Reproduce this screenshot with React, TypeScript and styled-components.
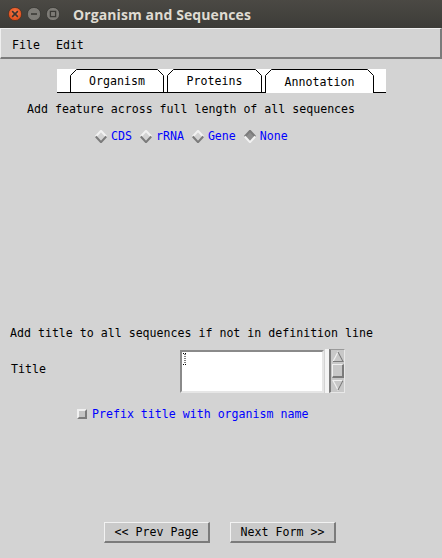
import React from "react";
import styled, { createGlobalStyle } from "styled-components";

const Global = createGlobalStyle`
  html, body { margin: 0; padding: 0; background: #d3d3d3; }
  * { box-sizing: border-box; }
`;

const MONO = `"DejaVu Sans Mono", "Liberation Mono", monospace`;

const Window = styled.div`
  width: 442px;
  height: 558px;
  background: #d3d3d3;
  display: flex;
  flex-direction: column;
  font-family: ${MONO};
  font-size: 11.6px;
  color: #000;
  overflow: hidden;
`;

const TitleBar = styled.div`
  height: 28px;
  flex: none;
  display: flex;
  align-items: center;
  background: linear-gradient(to bottom, #4b4944, #3d3c38);
  padding-left: 8px;
`;

const WinButtons = styled.div`
  display: flex;
  gap: 5px;
  align-items: center;
`;

const Title = styled.div`
  margin-left: 13px;
  font-family: "Open Sans", "DejaVu Sans", sans-serif;
  font-weight: 700;
  font-size: 14px;
  color: #dfdbd2;
  letter-spacing: 0.1px;
`;

const MenuBar = styled.div`
  height: 31px;
  flex: none;
  display: flex;
  align-items: center;
  gap: 16px;
  padding: 3px 0 0 11px;
  border-top: 1px solid #efefef;
  border-left: 1px solid #efefef;
  border-bottom: 2px solid #7b7b7b;
  border-right: 2px solid #7b7b7b;
`;

const MenuItem = styled.span`
  line-height: 14px;
`;

const Content = styled.div`
  flex: 1;
  display: flex;
  flex-direction: column;
`;

const TabStrip = styled.div`
  margin: 10px 0 0 57px;
  width: 329px;
  height: 24px;
  background: #fff;
  border-bottom: 1px solid #000;
  display: flex;
  padding-left: 13px;
  gap: 3px;
`;

const Tab = styled.div<{ $w: number; $active?: boolean }>`
  position: relative;
  width: ${(p) => p.$w}px;
  height: ${(p) => (p.$active ? 24 : 23)}px;
  background: #fff;
  display: flex;
  align-items: center;
  justify-content: center;
  padding-top: 1px;
  line-height: 14px;
  z-index: ${(p) => (p.$active ? 1 : 0)};
`;

const TabOutline = styled.svg`
  position: absolute;
  left: 0;
  top: 0;
  pointer-events: none;
`;

const TabLabel = styled.span`
  position: relative;
`;

const Line = styled.div<{ $top: number; $left: number }>`
  margin-top: ${(p) => p.$top}px;
  margin-left: ${(p) => p.$left}px;
  line-height: 14px;
  white-space: pre;
`;

const RadioRow = styled.div`
  margin: 13px 0 0 95px;
  display: flex;
  align-items: center;
  height: 14px;
  gap: 8px;
`;

const RadioItem = styled.div`
  display: flex;
  align-items: center;
  gap: 4px;
  color: #0000ff;
  line-height: 14px;
`;

const TitleRow = styled.div`
  margin: 9px 0 0 11px;
  display: flex;
  height: 44px;
`;

const FieldLabel = styled.div`
  width: 169px;
  padding-top: 13px;
  line-height: 14px;
`;

const TextBox = styled.div`
  margin-top: 1px;
  width: 144px;
  height: 43px;
  background: #fff;
  border-top: 2px solid #8a8a8a;
  border-left: 2px solid #8a8a8a;
  border-bottom: 2px solid #e6e6e6;
  border-right: 2px solid #e6e6e6;
  padding: 1px 0 0 1px;
`;

const Divider = styled.div`
  width: 4px;
  margin-left: 1px;
  background: #f4f4f4;
`;

const ScrollBar = styled.div`
  width: 16px;
  height: 44px;
  background: #c8c8c8;
  border-left: 2px solid #7b7b7b;
  border-top: 1px solid #9a9a9a;
  border-bottom: 1px solid #e8e8e8;
  border-right: 1px solid #e8e8e8;
  display: flex;
  flex-direction: column;
  align-items: center;
  justify-content: space-between;
  padding: 1px 0;
`;

const CheckRow = styled.div`
  margin: 14px 0 0 77px;
  display: flex;
  align-items: center;
  gap: 5px;
  color: #0000ff;
  line-height: 14px;
`;

const CheckBox = styled.div`
  width: 10px;
  height: 10px;
  background: #c4c4c4;
  border-top: 2px solid #f0f0f0;
  border-left: 2px solid #f0f0f0;
  border-bottom: 2px solid #7b7b7b;
  border-right: 2px solid #7b7b7b;
`;

const ButtonRow = styled.div`
  margin: 101px 0 0 104px;
  display: flex;
  gap: 20px;
`;

const Button = styled.div`
  width: 106px;
  height: 21px;
  background: #cacaca;
  border-top: 1px solid #f2f2f2;
  border-left: 1px solid #f2f2f2;
  border-bottom: 2px solid #7b7b7b;
  border-right: 2px solid #7b7b7b;
  display: flex;
  align-items: center;
  justify-content: center;
  line-height: 14px;
  white-space: pre;
`;

const CircleBtn = ({ kind }: { kind: "close" | "min" | "max" }) => (
  <svg width="14" height="14" viewBox="0 0 14 14">
    {kind === "close" ? (
      <>
        <defs>
          <radialGradient id="cg" cx="50%" cy="40%" r="60%">
            <stop offset="0" stopColor="#f77b4b" />
            <stop offset="1" stopColor="#dc4a17" />
          </radialGradient>
        </defs>
        <circle cx="7" cy="7" r="6.6" fill="url(#cg)" stroke="#3a2a22" strokeWidth="0.6" />
        <path d="M4.6 4.6 L9.4 9.4 M9.4 4.6 L4.6 9.4" stroke="#3b3430" strokeWidth="1.6" strokeLinecap="round" />
      </>
    ) : (
      <>
        <circle cx="7" cy="7" r="6.6" fill="#7e7c77" stroke="#2e2d2a" strokeWidth="0.6" />
        {kind === "min" ? (
          <path d="M4 7 H10" stroke="#3b3a36" strokeWidth="1.6" />
        ) : (
          <rect x="4.4" y="4.4" width="5.2" height="5.2" fill="none" stroke="#3b3a36" strokeWidth="1.3" />
        )}
      </>
    )}
  </svg>
);

const TabShape = ({ w, h }: { w: number; h: number }) => (
  <TabOutline width={w} height={h} viewBox={`0 0 ${w} ${h}`}>
    <path
      d={`M0.5 ${h} L0.5 6.5 L6.5 0.5 L${w - 6.5} 0.5 L${w - 0.5} 6.5 L${w - 0.5} ${h}`}
      fill="none"
      stroke="#000"
      strokeWidth="1"
    />
  </TabOutline>
);

const Diamond = ({ on }: { on?: boolean }) => (
  <svg width="12" height="13" viewBox="0 0 12 13">
    <polygon points="6,0.5 11.5,6.5 6,12.5 0.5,6.5" fill={on ? "#8e8e8e" : "#d3d3d3"} />
    <path d="M0.8 6.5 L6 0.8 L11.2 6.5" fill="none" stroke={on ? "#7b7b7b" : "#f2f2f2"} strokeWidth="2" />
    <path d="M0.8 6.5 L6 12.2 L11.2 6.5" fill="none" stroke={on ? "#f2f2f2" : "#7b7b7b"} strokeWidth="2" />
  </svg>
);

const Cursor = () => (
  <svg width="4" height="12" viewBox="0 0 4 12">
    <path d="M0 0.5 H4 M2 1 V11 M0 11.5 H4" stroke="#000" strokeWidth="1" strokeDasharray="1 1" />
  </svg>
);

const Arrow = ({ up }: { up?: boolean }) => (
  <svg width="12" height="11" viewBox="0 0 12 11">
    {up ? (
      <>
        <path d="M1 10.5 L6 1 L11 10.5" fill="none" stroke="#f0f0f0" strokeWidth="1.2" />
        <path d="M1 10.5 H11 L6 1" fill="none" stroke="#7b7b7b" strokeWidth="1.2" />
      </>
    ) : (
      <>
        <path d="M1 0.5 L6 10 L11 0.5 Z" fill="none" stroke="#f0f0f0" strokeWidth="1.2" />
        <path d="M6 10 L11 0.5" fill="none" stroke="#7b7b7b" strokeWidth="1.2" />
      </>
    )}
  </svg>
);

const MidBox = styled.div`
  width: 12px;
  height: 14px;
  border-top: 1px solid #f0f0f0;
  border-left: 1px solid #f0f0f0;
  border-bottom: 2px solid #7b7b7b;
  border-right: 2px solid #7b7b7b;
`;

const tabs = [
  { label: "Organism", w: 94 },
  { label: "Proteins", w: 95 },
  { label: "Annotation", w: 109, active: true },
];

const radios = [
  { label: "CDS" },
  { label: "rRNA" },
  { label: "Gene" },
  { label: "None", on: true },
];

export default function App() {
  return (
    <>
      <Global />
      <Window>
        <TitleBar>
          <WinButtons>
            <CircleBtn kind="close" />
            <CircleBtn kind="min" />
            <CircleBtn kind="max" />
          </WinButtons>
          <Title>Organism and Sequences</Title>
        </TitleBar>
        <MenuBar>
          <MenuItem>File</MenuItem>
          <MenuItem>Edit</MenuItem>
        </MenuBar>
        <Content>
          <TabStrip>
            {tabs.map((t) => (
              <Tab key={t.label} $w={t.w} $active={t.active}>
                <TabShape w={t.w} h={t.active ? 24 : 23} />
                <TabLabel>{t.label}</TabLabel>
              </Tab>
            ))}
          </TabStrip>
          <Line $top={9} $left={27}>Add feature across full length of all sequences</Line>
          <RadioRow>
            {radios.map((r) => (
              <RadioItem key={r.label}>
                <Diamond on={r.on} />
                <span>{r.label}</span>
              </RadioItem>
            ))}
          </RadioRow>
          <Line $top={183} $left={10}>Add title to all sequences if not in definition line</Line>
          <TitleRow>
            <FieldLabel>Title</FieldLabel>
            <TextBox>
              <Cursor />
            </TextBox>
            <Divider />
            <ScrollBar>
              <Arrow up />
              <MidBox />
              <Arrow />
            </ScrollBar>
          </TitleRow>
          <CheckRow>
            <CheckBox />
            <span>Prefix title with organism name</span>
          </CheckRow>
          <ButtonRow>
            <Button>{"<< Prev Page"}</Button>
            <Button>{"Next Form >>"}</Button>
          </ButtonRow>
        </Content>
      </Window>
    </>
  );
}
